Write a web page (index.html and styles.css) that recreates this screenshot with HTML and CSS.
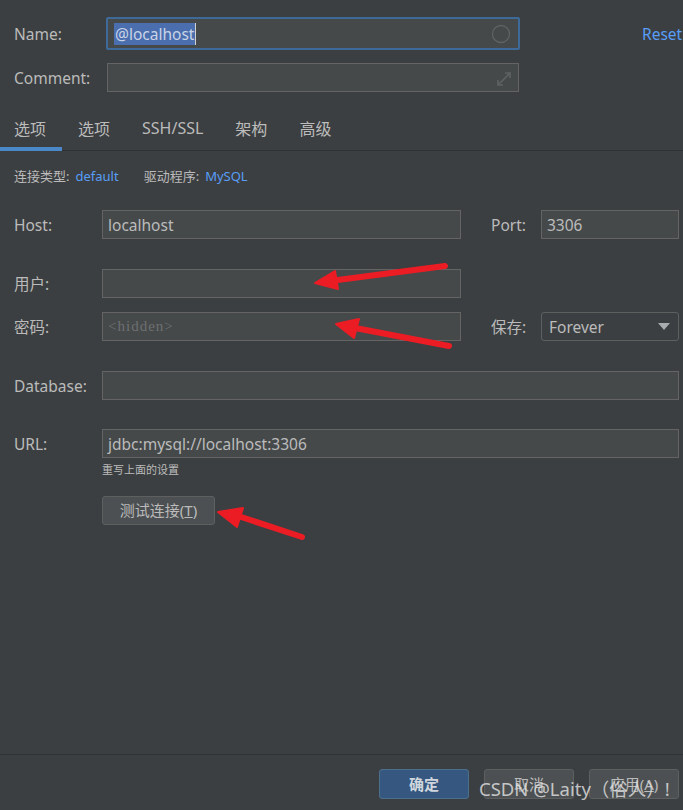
FILE: index.html
```html
<!DOCTYPE html>
<html lang="zh">
<head>
<meta charset="utf-8">
<title>Data Source</title>
<link rel="stylesheet" href="styles.css">
</head>
<body>
<div class="page">
  <div class="main">
    <div class="top-row name-row">
      <span class="label top-label">Name:</span>
      <div class="field name-field">
        <span class="selected">@localhost</span><span class="caret"></span>
        <svg class="field-icon" width="20" height="20" viewBox="0 0 20 20"><circle cx="10" cy="10" r="8.5" fill="none" stroke="#5f6263" stroke-width="1.3"/></svg>
      </div>
      <a class="reset">Reset</a>
    </div>
    <div class="top-row comment-row">
      <span class="label top-label">Comment:</span>
      <div class="field comment-field">
        <svg class="field-icon" width="18" height="18" viewBox="0 0 18 18"><g stroke="#5f6263" stroke-width="1.6" fill="none"><path d="M3 15 L15 3"/><path d="M10 3 H15 V8"/><path d="M3 10 V15 H8"/></g></svg>
      </div>
    </div>

    <div class="tabs">
      <span class="tab active">选项</span>
      <span class="tab">选项</span>
      <span class="tab">SSH/SSL</span>
      <span class="tab">架构</span>
      <span class="tab">高级</span>
    </div>

    <div class="info">
      <span>连接类型:</span><a class="link">default</a>
      <span class="gap">驱动程序:</span><a class="link">MySQL</a>
    </div>

    <div class="form-row host-row">
      <span class="label">Host:</span>
      <div class="field">localhost</div>
      <span class="label right-label">Port:</span>
      <div class="field">3306</div>
    </div>
    <div class="form-row user-row">
      <span class="label">用户:</span>
      <div class="field"></div>
    </div>
    <div class="form-row pass-row">
      <span class="label">密码:</span>
      <div class="field placeholder">&lt;hidden&gt;</div>
      <span class="label right-label">保存:</span>
      <div class="combo">Forever
        <svg class="combo-arrow" width="12" height="8" viewBox="0 0 12 8"><path d="M0 0 H12 L6 7 Z" fill="#a9acae"/></svg>
      </div>
    </div>
    <div class="form-row db-row">
      <span class="label">Database:</span>
      <div class="field wide"></div>
    </div>
    <div class="form-row url-row">
      <span class="label">URL:</span>
      <div class="field wide">jdbc:mysql://localhost:3306</div>
    </div>
    <div class="hint">重写上面的设置</div>
    <div class="btn-row">
      <button class="btn test-btn">测试连接(<u>T</u>)</button>
    </div>
  </div>

  <div class="footer">
    <button class="btn primary">确定</button>
    <button class="btn">取消</button>
    <button class="btn">应用(<u>A</u>)</button>
  </div>

  <svg class="annotations" width="683" height="810" viewBox="0 0 683 810">
    <g fill="#ec1c24" stroke="#ec1c24" stroke-linecap="round" stroke-linejoin="round">
      <path d="M445 266 L330 281" stroke-width="6" fill="none"/>
      <path d="M315 283 L335 271 L338 289 Z" stroke-width="2"/>
      <path d="M449 346 L350 327" stroke-width="6" fill="none"/>
      <path d="M336 324 L359 319 L354 338 Z" stroke-width="2"/>
      <path d="M302 537 L232 514" stroke-width="6" fill="none"/>
      <path d="M218 512 L243 508 L237 527 Z" stroke-width="2"/>
    </g>
  </svg>
  <div class="watermark">CSDN @Laity（俗人）!</div>
</div>
</body>
</html>
```

FILE: styles.css
```css
* {
  box-sizing: border-box;
}

html, body {
  margin: 0;
  padding: 0;
  background: #3c3f41;
}

body {
  font-family: "Noto Sans", "Noto Sans CJK SC", sans-serif;
  font-size: 15.5px;
  color: #bbbbbb;
}

.page {
  position: relative;
  width: 683px;
  height: 810px;
  display: flex;
  flex-direction: column;
  overflow: hidden;
}

.main {
  flex: 1;
  display: flex;
  flex-direction: column;
}

.label {
  color: #bbbbbb;
  white-space: nowrap;
}

.top-row {
  display: flex;
  align-items: center;
  padding-left: 14px;
}

.top-label {
  width: 92px;
}

.name-row {
  margin-top: 17px;
  height: 33px;
}

.comment-row {
  margin-top: 13px;
  height: 29px;
}

.field {
  height: 29px;
  background: #45494a;
  border: 1px solid #646464;
  display: flex;
  align-items: center;
  padding: 0 5px;
  color: #bbbbbb;
  white-space: nowrap;
  position: relative;
}

.name-field {
  width: 414px;
  height: 33px;
  border: 2px solid #3d6a99;
  border-radius: 2px;
  padding-left: 6px;
}

.selected {
  background: #4b6eaf;
  color: #c9d3e6;
  line-height: 22px;
  padding: 0 1px;
}

.caret {
  width: 1px;
  height: 22px;
  background: #d0d0d0;
}

.field-icon {
  margin-left: auto;
}

.name-field .field-icon {
  margin-right: 2px;
}

.comment-field {
  margin-left: 1px;
  width: 412px;
  height: 29px;
}

.comment-field .field-icon {
  margin-top: 3px;
}

.reset {
  margin-left: auto;
  color: #589df6;
  font-size: 15.5px;
  width: 41px;
  overflow: hidden;
  white-space: nowrap;
}

.tabs {
  margin-top: 16px;
  display: flex;
  height: 43px;
  border-bottom: 1px solid #2f3133;
  font-size: 16px;
}

.tab {
  padding: 0 16px;
  height: 42px;
  display: flex;
  align-items: center;
  padding-bottom: 2px;
  color: #bbbbbb;
}

.tab.active {
  padding-left: 14px;
  padding-right: 16px;
  border-bottom: 4px solid #4a88c7;
  height: 43px;
  margin-bottom: -1px;
  padding-bottom: 0;
}

.info {
  margin-top: 15px;
  padding-left: 14px;
  font-size: 13px;
  line-height: 20px;
  display: flex;
}

.info .link {
  color: #589df6;
  margin-left: 6px;
}

.info .gap {
  margin-left: 25px;
}

.form-row {
  display: grid;
  grid-template-columns: 88px 359px 30px 50px 138px;
  align-items: center;
  padding-left: 14px;
}

.form-row .wide {
  grid-column: 2 / 6;
}

.right-label {
  grid-column: 4;
}

.host-row {
  margin-top: 24px;
}

.user-row {
  margin-top: 30px;
}

.pass-row {
  margin-top: 14px;
}

.db-row {
  margin-top: 30px;
}

.url-row {
  margin-top: 29px;
}

.placeholder {
  font-family: "Liberation Serif", "DejaVu Serif", serif;
  color: #6e7071;
  font-size: 15px;
  letter-spacing: 1px;
}

.combo {
  height: 29px;
  border: 1px solid #5e6060;
  border-radius: 3px;
  background: #3c3f41;
  display: flex;
  align-items: center;
  padding: 0 7px;
  color: #bbbbbb;
}

.combo-arrow {
  margin-left: auto;
  margin-right: 1px;
}

.hint {
  margin-top: 4px;
  padding-left: 102px;
  font-size: 11px;
  line-height: 15px;
  color: #bbbbbb;
}

.btn-row {
  margin-top: 19px;
  padding-left: 102px;
}

.btn {
  font-family: "Noto Sans", "Noto Sans CJK SC", sans-serif;
  font-size: 15px;
  color: #bbbbbb;
  background: #4c5052;
  border: 1px solid #5e6060;
  border-radius: 3px;
  height: 29px;
  padding: 0;
  line-height: 27px;
}

.btn u {
  text-decoration: underline;
  text-underline-offset: 1px;
}

.test-btn {
  width: 113px;
}

.footer {
  border-top: 1px solid #323232;
  padding: 14px 4px 11px 0;
  display: flex;
  justify-content: flex-end;
  gap: 15px;
}

.footer .btn {
  width: 90px;
  height: 30px;
}

.footer .primary {
  background: #365880;
  border-color: #4c708c;
  color: #d0d6dd;
  font-weight: 600;
}

.annotations {
  position: absolute;
  left: 0;
  top: 0;
  pointer-events: none;
}

.watermark {
  position: absolute;
  left: 479px;
  top: 776px;
  font-family: "Noto Sans", "Noto Sans CJK SC", sans-serif;
  font-size: 18.5px;
  line-height: 26px;
  color: rgba(225, 225, 225, 0.82);
  white-space: nowrap;
  pointer-events: none;
}
```
